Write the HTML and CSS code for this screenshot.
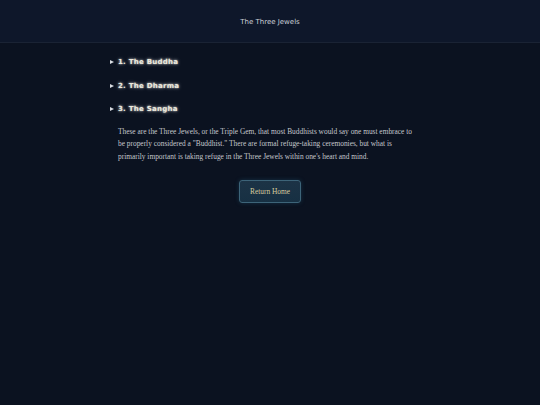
FILE: index.html
```html
<!DOCTYPE html>
<html lang="en">
<head>
<meta charset="utf-8">
<title>The Three Jewels</title>
<link rel="stylesheet" href="styles.css">
</head>
<body>
<header class="top">
  <h1 class="title">The Three Jewels</h1>
</header>
<main class="content">
  <details class="jewel"><summary>1. The Buddha</summary></details>
  <details class="jewel"><summary>2. The Dharma</summary></details>
  <details class="jewel"><summary>3. The Sangha</summary></details>
  <p class="text">These are the Three Jewels, or the Triple Gem, that most Buddhists would say one must embrace to be properly considered a "Buddhist." There are formal refuge-taking ceremonies, but what is primarily important is taking refuge in the Three Jewels within one's heart and mind.</p>
  <div class="actions"><button class="home">Return Home</button></div>
</main>
</body>
</html>
```
FILE: styles.css
```css
html, body { margin: 0; padding: 0; }
body {
  background: #0b1220;
  min-height: 405px;
  font-family: "Liberation Serif", serif;
}
.top {
  background: #0e172a;
  border-bottom: 1px solid #1a2334;
  height: 42px;
  display: flex;
  align-items: center;
  justify-content: center;
}
.title {
  margin: 0;
  padding-top: 1px;
  font-family: "DejaVu Sans", sans-serif;
  font-weight: normal;
  font-size: 7px;
  color: #c9ced6;
}
.content {
  width: 320px;
  margin: 0 auto;
  padding-top: 12px;
}
.jewel summary {
  font-family: "DejaVu Sans", sans-serif;
  font-weight: bold;
  font-size: 7px;
  letter-spacing: 0.25px;
  color: #ece9dc;
  text-shadow: 0 0 2px rgba(255,255,255,0.8), 0 0 4px rgba(255,255,255,0.4);
  height: 14px;
  line-height: 14px;
  margin-bottom: 9.6px;
  cursor: pointer;
  list-style: none;
  display: flex;
  align-items: center;
  gap: 3px;
}
.jewel summary::-webkit-details-marker { display: none; }
.jewel summary::before {
  content: "";
  width: 0; height: 0;
  border-left: 4px solid #d8dbe0;
  border-top: 2.5px solid transparent;
  border-bottom: 2.5px solid transparent;
  margin-right: 1px;
}
.text {
  margin: 0 0 0 8px;
  width: 300px;
  font-size: 7.4px;
  line-height: 12.5px;
  color: #c4c7cc;
}
.actions {
  display: flex;
  justify-content: center;
  margin-top: 17px;
}
.home {
  width: 62px;
  height: 23px;
  border: 1px solid #3d6479;
  border-radius: 3px;
  background: linear-gradient(#1c3346, #173043);
  color: #d6cc9e;
  font-family: "Liberation Serif", serif;
  font-size: 7.4px;
  box-shadow: 0 0 4px rgba(40,110,140,0.35);
  padding: 0;
}
```
